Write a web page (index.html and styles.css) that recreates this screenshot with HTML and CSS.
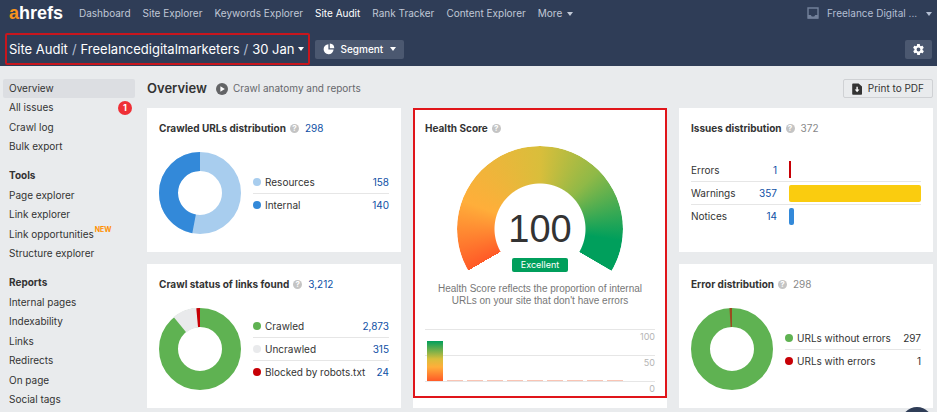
FILE: index.html
```html
<!DOCTYPE html>
<html lang="en">
<head>
<meta charset="utf-8">
<title>Site Audit - Overview</title>
<link rel="stylesheet" href="styles.css">
</head>
<body>
<header class="header">
  <div class="topbar">
    <a class="logo" href="#"><span class="logo-a">a</span>hrefs</a>
    <nav class="nav">
      <a href="#">Dashboard</a>
      <a href="#">Site Explorer</a>
      <a href="#">Keywords Explorer</a>
      <a class="current" href="#">Site Audit</a>
      <a href="#">Rank Tracker</a>
      <a href="#">Content Explorer</a>
      <a href="#">More <span class="caret"></span></a>
    </nav>
    <div class="account">
      <svg class="tray" viewBox="0 0 12 12" width="12" height="12"><path d="M1 1h10v10H1z" fill="none" stroke="#72809a" stroke-width="1.4"/><path d="M1 8h2.8l1 1.6h2.4l1-1.6H11v3.4H1z" fill="#72809a"/></svg>
      <button class="account-name" type="button">Freelance Digital ... <span class="caret"></span></button>
    </div>
  </div>
  <div class="subbar">
    <nav class="crumbs">
      <a href="#">Site Audit</a><span class="slash">/</span><a href="#">Freelancedigitalmarketers</a><span class="slash">/</span><a href="#">30 Jan</a><span class="caret"></span>
    </nav>
    <button class="dark-btn segment" type="button">
      <svg viewBox="0 0 12 12" width="12" height="12"><path d="M5.4 1.2v5.4h5.2A5 5 0 1 1 5.4 1.2z" fill="#fff"/><path d="M6.8 .6a4.9 4.9 0 0 1 4.5 4.7H6.8z" fill="#fff"/></svg>
      Segment <span class="caret"></span>
    </button>
    <button class="dark-btn settings" type="button" aria-label="Settings">
      <svg viewBox="0 0 24 24" width="13" height="13"><path fill="#fff" d="M19.4 13c0-.3.1-.6.1-1s0-.7-.1-1l2.1-1.600c.2-.2.2-.4.1-.6l-2-3.500c-.1-.2-.4-.3-.6-.2l-2.500 1c-.5-.4-1.100-.7-1.700-1l-.4-2.600c0-.3-.2-.5-.5-.5h-4c-.2 0-.4.2-.5.400l-.4 2.700c-.6.2-1.100.6-1.700 1l-2.500-1c-.2-.1-.5 0-.6.2l-2 3.500c-.1.2-.1.4.1.6L4.600 11c0 .3-.1.7-.1 1s0 .7.1 1l-2.100 1.600c-.2.2-.2.4-.1.6l2 3.500c.1.2.4.3.6.2l2.500-1c.5.4 1.100.7 1.700 1l.4 2.700c0 .2.200.400.500.400h4c.2 0 .5-.2.5-.4l.4-2.700c.6-.2 1.100-.6 1.700-1l2.500 1c.2.1.5 0 .6-.2l2-3.500c.1-.2.1-.5-.1-.6L19.400 13zM12 15.500a3.500 3.500 0 1 1 0-7 3.500 3.500 0 0 1 0 7z"/></svg>
    </button>
  </div>
</header>

<div class="layout">
  <aside class="sidebar">
    <ul>
      <li><a class="active" href="#">Overview</a></li>
      <li><a href="#">All issues <span class="badge">1</span></a></li>
      <li><a href="#">Crawl log</a></li>
      <li><a href="#">Bulk export</a></li>
    </ul>
    <h2>Tools</h2>
    <ul>
      <li><a href="#">Page explorer</a></li>
      <li><a href="#">Link explorer</a></li>
      <li><a href="#">Link opportunities<span class="new">NEW</span></a></li>
      <li><a href="#">Structure explorer</a></li>
    </ul>
    <h2>Reports</h2>
    <ul>
      <li><a href="#">Internal pages</a></li>
      <li><a href="#">Indexability</a></li>
      <li><a href="#">Links</a></li>
      <li><a href="#">Redirects</a></li>
      <li><a href="#">On page</a></li>
      <li><a href="#">Social tags</a></li>
    </ul>
  </aside>

  <main class="main">
    <div class="page-head">
      <h1>Overview</h1>
      <svg viewBox="0 0 12 12" width="12" height="12"><circle cx="6" cy="6" r="6" fill="#636466"/><path d="M4.400 3.200v5.600L8.800 6z" fill="#fff"/></svg>
      <a class="sub" href="#">Crawl anatomy and reports</a>
      <button class="print" type="button">
        <svg viewBox="0 0 10 12" width="10" height="12"><path d="M1 .5h5.600L10 3.500V11a.8.8 0 0 1-.8.800H1a.8.8 0 0 1-.8-.8V1.300A.8.800 0 0 1 1 .5z" fill="#333"/><path d="M4.400 3.800h1.400v2.700h1.700L5.100 9.300 2.700 6.500h1.700z" fill="#fff"/></svg>
        Print to PDF
      </button>
    </div>

    <div class="cards">
      <section class="card">
        <h3>Crawled URLs distribution <span class="help">?</span> <a class="total" href="#">298</a></h3>
        <div class="body">
          <svg class="donut" viewBox="0 0 82 82" width="82" height="82">
            <g transform="rotate(-90 41 41)" fill="none" stroke-width="19">
              <circle cx="41" cy="41" r="31.500" stroke="#a8cdee"/>
              <circle cx="41" cy="41" r="31.500" stroke="#3389d9" pathLength="298" stroke-dasharray="140 158" stroke-dashoffset="-158"/>
            </g>
          </svg>
          <table class="legend">
            <tr><th scope="row"><span class="dot light"></span>Resources</th><td><a href="#">158</a></td></tr>
            <tr><th scope="row"><span class="dot blue"></span>Internal</th><td><a href="#">140</a></td></tr>
          </table>
        </div>
      </section>

      <section class="card health">
        <h3>Health Score <span class="help">?</span></h3>
        <div class="gauge">
          <div class="arc"></div>
          <div class="score">100</div>
          <div class="rating">Excellent</div>
        </div>
        <p>Health Score reflects the proportion of internal URLs on your site that don't have errors</p>
        <div class="chart">
          <div class="line"><span>100</span></div>
          <div class="line"><span>50</span></div>
          <div class="line"><span>0</span></div>
          <div class="bars"><i class="full"></i><i></i><i></i><i></i><i></i><i></i><i></i><i></i><i></i><i></i></div>
        </div>
      </section>

      <section class="card">
        <h3>Issues distribution <span class="help">?</span> <span class="total">372</span></h3>
        <div class="body">
          <table class="issues">
            <tr><th scope="row">Errors</th><td><a href="#">1</a></td><td class="track"><div class="bar thin red" style="width:1%"></div></td></tr>
            <tr><th scope="row">Warnings</th><td><a href="#">357</a></td><td class="track"><div class="bar yellow" style="width:100%"></div></td></tr>
            <tr><th scope="row">Notices</th><td><a href="#">14</a></td><td class="track"><div class="bar blue" style="width:4%"></div></td></tr>
          </table>
        </div>
      </section>

      <section class="card">
        <h3>Crawl status of links found <span class="help">?</span> <a class="total" href="#">3,212</a></h3>
        <div class="body">
          <svg class="donut" viewBox="0 0 82 82" width="82" height="82">
            <g transform="rotate(-90 41 41)" fill="none" stroke-width="19">
              <circle cx="41" cy="41" r="31.500" stroke="#5fb252"/>
              <circle cx="41" cy="41" r="31.500" stroke="#e9eaec" stroke-width="20" pathLength="3212" stroke-dasharray="315 2897" stroke-dashoffset="-2860"/>
              <circle cx="41" cy="41" r="31.500" stroke="#c70006" pathLength="3212" stroke-dasharray="47 3165" stroke-dashoffset="-3165"/>
            </g>
          </svg>
          <table class="legend">
            <tr><th scope="row"><span class="dot green"></span>Crawled</th><td><a href="#">2,873</a></td></tr>
            <tr><th scope="row"><span class="dot grey"></span>Uncrawled</th><td><a href="#">315</a></td></tr>
            <tr><th scope="row"><span class="dot red"></span>Blocked by robots.txt</th><td><a href="#">24</a></td></tr>
          </table>
        </div>
      </section>

      <section class="card">
        <h3>Error distribution <span class="help">?</span> <span class="total">298</span></h3>
        <div class="body">
          <svg class="donut" viewBox="0 0 82 82" width="82" height="82">
            <g transform="rotate(-90 41 41)" fill="none" stroke-width="19">
              <circle cx="41" cy="41" r="31.500" stroke="#5fb252"/>
              <circle cx="41" cy="41" r="31.500" stroke="#9b4a20" pathLength="298" stroke-dasharray="3 295" stroke-dashoffset="-295"/>
            </g>
          </svg>
          <table class="legend">
            <tr><th scope="row"><span class="dot green"></span>URLs without errors</th><td>297</td></tr>
            <tr><th scope="row"><span class="dot red"></span>URLs with errors</th><td>1</td></tr>
          </table>
        </div>
      </section>
    </div>
  </main>
</div>
<button class="chat" type="button" aria-label="Open chat"></button>
</body>
</html>
```
FILE: styles.css
```css
* { box-sizing: border-box; }
body {
  margin: 0;
  background: #e9ebed;
  color: #333;
  font: 10px/19px Inter, "Liberation Sans", Arial, sans-serif;
}
a { color: inherit; text-decoration: none; }
button { font: inherit; color: inherit; border: 0; background: none; padding: 0; cursor: pointer; }
h1, h2, h3, p, ul { margin: 0; padding: 0; }
h1 { font-weight: 600; }
h2, h3 { font-weight: 700; }
ul { list-style: none; }
svg { flex: none; }

.caret {
  display: inline-block;
  border: 3px solid transparent;
  border-top: 4px solid currentColor;
  border-bottom: 0;
  vertical-align: middle;
  margin-left: 2px;
}

.header { background: #2f3d57; color: #fff; height: 66px; }
.topbar { display: flex; align-items: center; height: 26px; padding: 0 5px 0 9px; }
.logo { font: bold 18px/24px "Liberation Sans", Arial, sans-serif; width: 70px; }
.logo-a { color: #f7931e; }
.nav { display: flex; gap: 12px; color: #c0c8d6; }
.nav .current { color: #fff; }
.account { display: flex; align-items: center; gap: 8px; margin-left: auto; color: #b4bfd3; height: 22px; }
.account .caret { margin-left: 6px; }
.subbar { display: flex; align-items: center; padding: 7px 5px 0; }
.crumbs {
  display: flex;
  align-items: center;
  height: 32px;
  padding: 0 4px 0 2px;
  border: 2px solid #c8161d;
  border-radius: 2px;
  font-size: 13px;
}
.slash { margin: 0 4px; color: #b4bfd3; }
.crumbs .caret { margin-left: 4px; }
.dark-btn {
  display: flex;
  align-items: center;
  justify-content: center;
  gap: 5px;
  height: 19px;
  border-radius: 2px;
  background: #4b5870;
}
.segment { padding: 0 8px; margin-left: 5px; font-weight: 500; }
.settings { width: 27px; margin-left: auto; }

.layout { display: flex; align-items: flex-start; padding: 13px 4px 0 3px; }
.sidebar { width: 132px; flex: none; margin-right: 12px; }
.sidebar a { display: flex; align-items: center; height: 19px; padding: 0 3px 0 6px; border-radius: 2px; }
.sidebar li:nth-child(even) { padding-bottom: 1px; }
.sidebar .active { background: #dcdee2; }
.sidebar h2 { font-size: 10px; padding-left: 6px; margin: 9px 0 1px; }
.badge {
  width: 14px;
  height: 14px;
  margin-left: auto;
  border-radius: 50%;
  background: #ef2f36;
  color: #fff;
  font-weight: bold;
  font-size: 9px;
  line-height: 14px;
  text-align: center;
}
.new { color: #ff8f00; font-weight: bold; font-size: 7px; line-height: 8px; align-self: flex-start; margin: 1px 0 0 1px; }

.main { flex: 1; min-width: 0; }
.page-head { display: flex; align-items: center; height: 19px; margin-bottom: 10px; }
.page-head h1 { font-size: 13px; margin-right: 9px; }
.sub { margin-left: 5px; color: #66686c; }
.print {
  display: flex;
  align-items: center;
  gap: 6px;
  height: 19px;
  margin-left: auto;
  padding: 0 8px;
  border: 1px solid #cfd1d4;
  border-radius: 2px;
}

.cards { display: grid; grid-template-columns: repeat(3, minmax(0, 1fr)); gap: 12px; align-items: start; }
.card { background: #fff; padding: 10px 12px 18px; }
.card h3 { display: flex; align-items: center; font-size: 10px; line-height: 20px; }
.help {
  width: 9px;
  height: 9px;
  margin: 0 6px 0 4px;
  border-radius: 50%;
  background: #c4c4c4;
  color: #fff;
  font-size: 8px;
  line-height: 9px;
  text-align: center;
}
.total { font-weight: normal; color: #888; }
a.total, td a { color: #0e4fa5; }
.body { display: flex; align-items: center; height: 82px; margin-top: 14px; gap: 12px; }
table { border-collapse: collapse; flex: 1; }
tr + tr { border-top: 1px solid #e6e6e6; }
th, td { padding: 0; height: 23px; line-height: 22px; }
th { font-weight: normal; text-align: left; white-space: nowrap; }
td { text-align: right; }
.legend tr { display: flex; justify-content: space-between; }
.legend th, .legend td { height: 22px; }
.dot { display: inline-block; width: 8px; height: 8px; margin-right: 4px; border-radius: 50%; }
.light { background: #a8cdee; }
.blue { background: #3389d9; }
.green { background: #5fb252; }
.grey { background: #e9eaec; }
.red { background: #c70006; }
.yellow { background: #facc0f; }
.issues th { width: 52px; }
.issues td { width: 34px; }
.issues .track { width: auto; padding-left: 12px; }
.bar { height: 17px; border-radius: 2px; }
.bar.thin { border-radius: 0; min-width: 2px; }

.health { position: relative; grid-row: span 2; align-self: stretch; padding-bottom: 13px; }
.health::after { content: ""; position: absolute; inset: 0 0 10px; border: 2px solid #e0151a; pointer-events: none; }
.gauge { position: relative; width: 166px; height: 126px; margin: 8px auto 0; }
.arc {
  width: 166px;
  height: 166px;
  border-radius: 50%;
  background: conic-gradient(from -120deg, #ff5a27 0deg, #ffae3a 50deg, #d9be3b 120deg, #8fb947 165deg, #009f5c 218deg, #009f5c 240deg, transparent 240.5deg);
  mask: radial-gradient(circle, transparent 45px, #000 46px);
}
.score { position: absolute; inset: 63px 0 auto; font: 38px/40px "Liberation Sans", Arial, sans-serif; text-align: center; }
.rating {
  position: absolute;
  top: 112px;
  left: 55px;
  width: 56px;
  height: 14px;
  border-radius: 2px;
  background: #009f5c;
  color: #fff;
  font-size: 9px;
  line-height: 14px;
  text-align: center;
}
.health p { margin: 11px 8px 0; color: #777; font: 10px/12px "Liberation Sans", Arial, sans-serif; text-align: center; }
.chart { position: relative; margin-top: 22px; color: #b5b5b5; font-size: 9px; line-height: 14px; text-align: right; }
.line { height: 26px; border-top: 1px solid #e6e6e6; }
.line:nth-child(3) { height: 14px; }
.bars { position: absolute; left: 2px; top: 0; height: 52px; display: flex; align-items: flex-end; gap: 4px; }
.bars i { width: 16px; height: 1px; background: #f9c4b4; }
.bars .full { height: 40px; background: linear-gradient(#009f5c, #d9be3b 45%, #ffae3a 65%, #ff5a27); }

.chat { position: fixed; right: 4px; bottom: -27px; width: 32px; height: 32px; border-radius: 50%; background: #2f3d57; }
```
